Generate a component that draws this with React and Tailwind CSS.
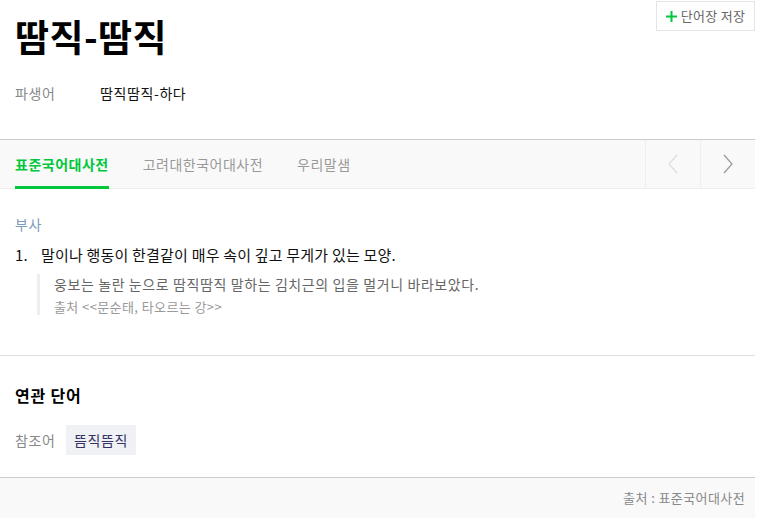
import React from 'react';

const font = { fontFamily: '"Noto Sans CJK KR", "Noto Sans", sans-serif' };

export default function App() {
  return (
    <div className="w-[765px] h-[518px] bg-white overflow-hidden" style={font}>
      <div className="w-[755px]">
        {/* Header */}
        <div className="relative h-[139px] px-[15px]">
          <button className="absolute right-0 top-[1px] h-[30px] w-[99px] border border-[#e5e5e5] bg-white flex items-center justify-center gap-[4px] text-[13px] tracking-[0.3px] text-[#666]">
            <svg width="11" height="11" viewBox="0 0 11 11" stroke="#00c73c" strokeWidth="2">
              <path d="M5.5 0 V11 M0 5.5 H11" />
            </svg>
            <span>단어장 저장</span>
          </button>
          <h1 className="pt-[12px] text-[37px] font-bold tracking-[0.4px] leading-[48px] text-black">땀직-땀직</h1>
          <div className="mt-[23px] flex text-[14px] tracking-[0.6px] leading-[20px]">
            <span className="w-[85px] text-[#888]">파생어</span>
            <span className="text-[#111]">땀직땀직-하다</span>
          </div>
        </div>

        {/* Tabs */}
        <div className="h-[50px] border-t border-[#ccc] border-b border-b-[#eee] bg-[#f9f9f9] flex">
          <div className="flex-1 flex px-[15px] gap-[34px] text-[14px] tracking-[0.5px]">
            <div className="relative h-full flex items-center font-bold text-[#00c73c]">
              표준국어대사전
              <div className="absolute left-0 right-0 bottom-[-1px] h-[3px] bg-[#00c73c]" />
            </div>
            <div className="h-full flex items-center text-[#999]">고려대한국어대사전</div>
            <div className="h-full flex items-center text-[#999]">우리말샘</div>
          </div>
          <div className="w-[55px] border-l border-[#eee] flex items-center justify-center">
            <svg width="12" height="20" viewBox="0 0 12 20" fill="none" stroke="#ddd" strokeWidth="1.2">
              <path d="M10 1 L2 10 L10 19" />
            </svg>
          </div>
          <div className="w-[55px] border-l border-[#eee] flex items-center justify-center">
            <svg width="12" height="20" viewBox="0 0 12 20" fill="none" stroke="#999" strokeWidth="1.2">
              <path d="M2 1 L10 10 L2 19" />
            </svg>
          </div>
        </div>

        {/* Meaning */}
        <div className="h-[167px] px-[15px] pt-[25px] border-b border-[#ddd]">
          <div className="text-[14px] tracking-[0.5px] leading-[20px] text-[#7d9bbb]">부사</div>
          <div className="mt-[11px] flex text-[15px] tracking-[0.2px] leading-[20px] text-[#111]">
            <span className="w-[26px]">1.</span>
            <span>말이나 행동이 한결같이 매우 속이 깊고 무게가 있는 모양.</span>
          </div>
          <div className="mt-[9px] ml-[22px] border-l-[3px] border-[#eee] pl-[14px]">
            <div className="text-[14px] tracking-[0.6px] leading-[20px] text-[#666]">웅보는 놀란 눈으로 땀직땀직 말하는 김치근의 입을 멀거니 바라보았다.</div>
            <div className="mt-[5px] text-[13px] tracking-[0.4px] leading-[16px] text-[#999]">출처 &lt;&lt;문순태, 타오르는 강&gt;&gt;</div>
          </div>
        </div>

        {/* Related */}
        <div className="h-[122px] px-[15px] pt-[28px] border-b border-[#ccc]">
          <div className="text-[16px] tracking-[0.8px] font-bold leading-[22px] text-black">연관 단어</div>
          <div className="mt-[19px] flex items-center text-[14px] tracking-[0.6px]">
            <span className="w-[51px] text-[#888]">참조어</span>
            <span className="h-[30px] px-[8px] flex items-center bg-[#f0f1f4] text-[#333366]">뜸직뜸직</span>
          </div>
        </div>

        {/* Footer */}
        <div className="h-[40px] bg-[#f9f9f9] flex items-center justify-end pr-[10px] text-[13px] tracking-[0.4px] text-[#888]">
          출처 : 표준국어대사전
        </div>
      </div>
    </div>
  );
}
